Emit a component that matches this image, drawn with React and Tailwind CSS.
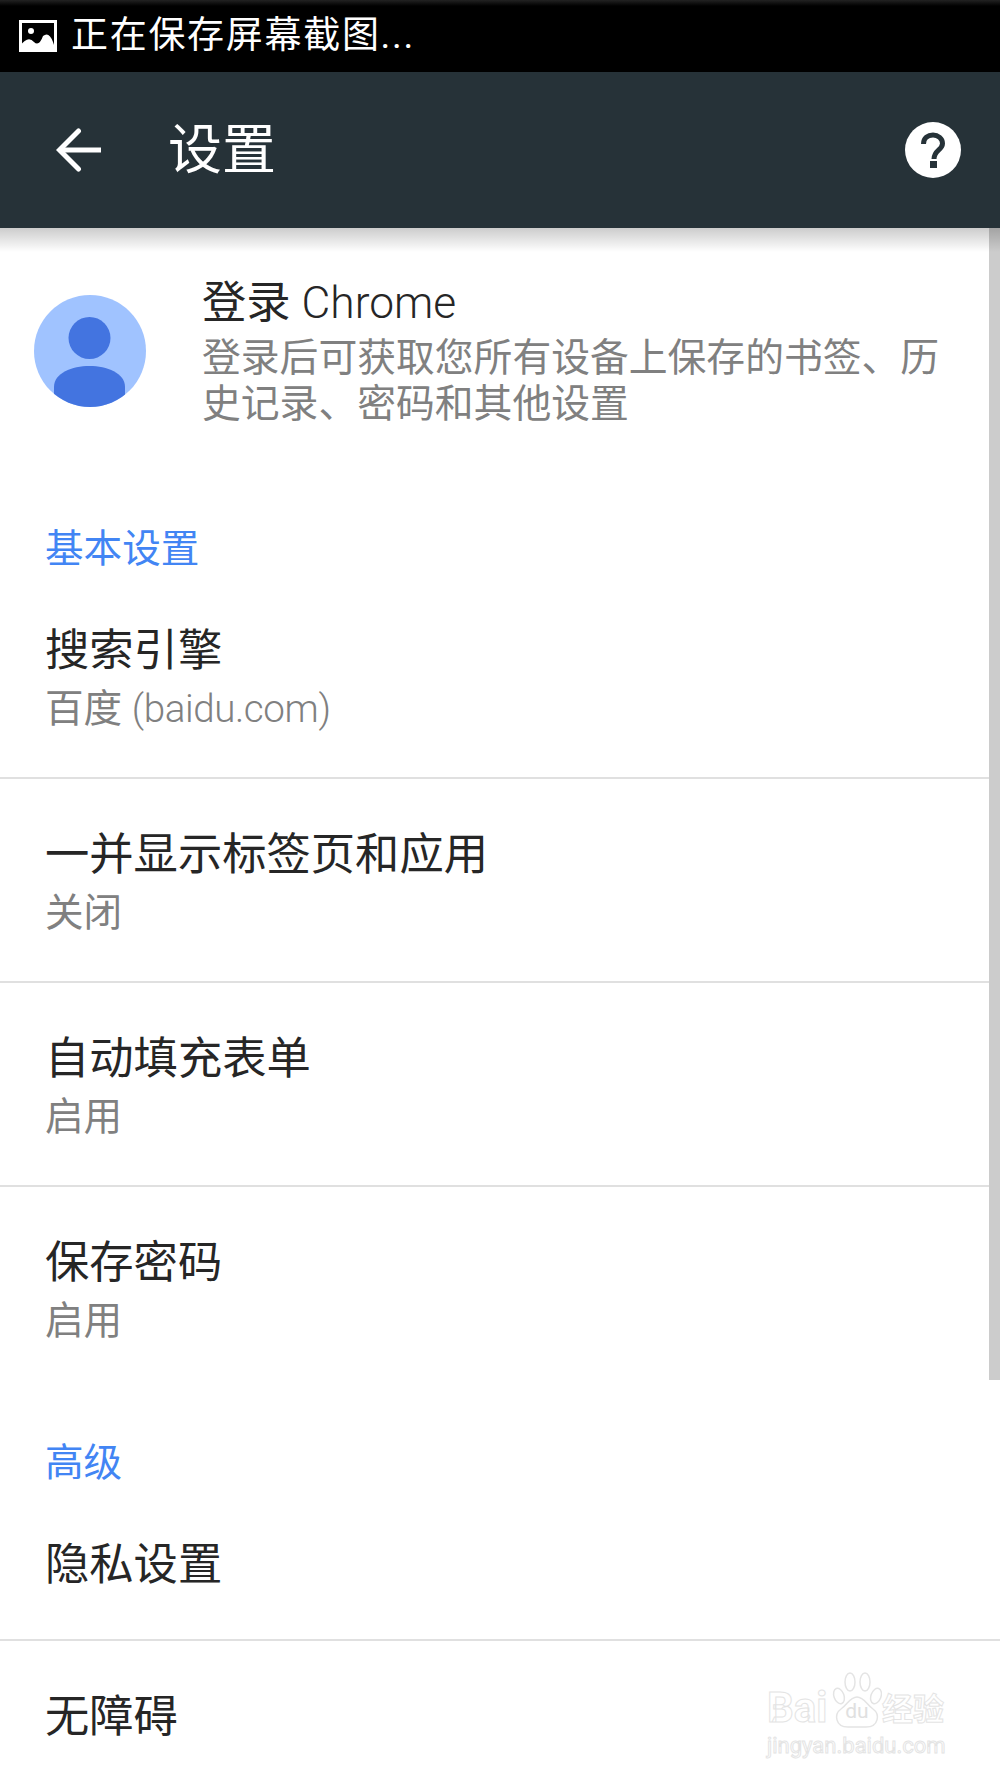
const font = { fontFamily: '"Roboto","Noto Sans CJK SC",sans-serif' };

function Row({ title, sub, border = true, h = "h-[204px]" }) {
  return (
    <div className={`${h} pl-[45px] flex flex-col ${border ? "border-b-2 border-[#e0e0e0]" : ""}`}>
      <div className="pt-[49px] text-[44.3px] leading-[54px] text-[#262626]">{title}</div>
      {sub && <div className="pt-[8px] text-[38.6px] leading-[46px] text-[#808080]">{sub}</div>}
    </div>
  );
}

function Section({ children, className }) {
  return <div className={`pl-[45px] text-[38.6px] leading-[46px] text-[#4285f4] ${className}`}>{children}</div>;
}

const outline = "text-transparent font-bold [-webkit-text-stroke:1px_#e4e4e4]";

function Watermark() {
  return (
    <div className="absolute left-[767px] top-[1672px] flex flex-col">
      <div className="flex items-end h-[56px]">
        <span className={`${outline} text-[42px] leading-[40px] w-[65px]`}>Bai</span>
        <div className="relative w-[50px] h-[56px] flex items-end justify-center pb-[6px]">
          <svg className="absolute inset-0" width="50" height="56" viewBox="0 0 50 56" fill="#fff" stroke="#e4e4e4" strokeWidth="1.5">
            <ellipse cx="7" cy="24" rx="5" ry="8" transform="rotate(-20 7 24)" />
            <ellipse cx="18" cy="10" rx="5" ry="9" />
            <ellipse cx="33" cy="10" rx="5" ry="9" />
            <ellipse cx="44" cy="24" rx="5" ry="8" transform="rotate(20 44 24)" />
            <path d="M25 25 C18 25 15 33 9 37 C2 42 3 55 16 55 H34 C47 55 48 42 41 37 C35 33 32 25 25 25 Z" />
          </svg>
          <span className="relative text-[21px] leading-[22px] text-[#e0e0e0]">du</span>
        </div>
        <span className={`${outline} text-[31px] leading-[36px]`}>经验</span>
      </div>
      <span className="mt-[5px] text-[22px] leading-[26px] text-transparent [-webkit-text-stroke:1px_#e4e4e4]">jingyan.baidu.com</span>
    </div>
  );
}

export default function App() {
  return (
    <div style={font} className="relative w-[1000px] h-[1778px] overflow-hidden bg-white">
      <div className="h-[72px] bg-[linear-gradient(#222,#000_6px)] flex items-center pl-[19px] gap-[14px] text-white text-[37px] leading-[44px]">
        <svg width="38" height="32" viewBox="0 0 38 32">
          <rect x="1.5" y="1.5" width="35" height="29" fill="none" stroke="#fff" strokeWidth="3" />
          <circle cx="12" cy="11" r="3" fill="#fff" />
          <path d="M1 31 V26 Q9 15 15 22 Q20 27 24 16 Q30 11 34 22 L37 31 Z" fill="#fff" />
        </svg>
        <span className="tracking-[1.7px] -mt-[1px]">正在保存屏幕截图...</span>
      </div>
      <div className="relative z-10 h-[156px] bg-[#263238] flex items-center text-white">
        <svg className="ml-[56px]" width="45" height="44" viewBox="0 0 45 44" fill="none" stroke="#fff" strokeWidth="5">
          <path d="M3 22 H45" />
          <path d="M22.5 3 L3.5 22 L22.5 41" strokeLinecap="round" />
        </svg>
        <div className="ml-[67px] text-[54px] leading-[60px] mt-[1px]">设置</div>
        <svg className="ml-auto mr-[39px]" width="56" height="56" viewBox="0 0 56 56">
          <circle cx="28" cy="28" r="28" fill="#fff" />
          <path d="M18.5 22 C18.5 16 23 13 28 13 C33 13 37.5 16.5 37.5 21.5 C37.5 28 29 28 29 37" fill="none" stroke="#263238" strokeWidth="5" />
          <rect x="25" y="39" width="7" height="7" fill="#263238" />
        </svg>
        <div className="absolute top-full inset-x-0 h-[24px] bg-gradient-to-b from-[rgba(0,0,0,0.2)] to-transparent" />
      </div>

      <div className="flex h-[243px]">
        <svg className="ml-[34px] mt-[67px]" width="112" height="112" viewBox="0 0 112 112">
          <defs>
            <clipPath id="c"><circle cx="56" cy="56" r="56" /></clipPath>
          </defs>
          <circle cx="56" cy="56" r="56" fill="#a0c3ff" />
          <circle cx="55.5" cy="43" r="21" fill="#4374e0" />
          <path d="M20 112 V92 C20 78 38 71 55.5 71 C73 71 91 78 91 92 V112 Z" fill="#4374e0" clipPath="url(#c)" />
        </svg>
        <div className="ml-[56px] w-[750px]">
          <div className="pt-[48px] text-[44.3px] leading-[54px] text-[#262626]">登录 <span className="font-light">Chrome</span></div>
          <div className="pt-[5px] text-[38.8px] leading-[46px] text-[#808080]">登录后可获取您所有设备上保存的书签、历史记录、密码和其他设置</div>
        </div>
      </div>

      <Section className="pt-[55px] pb-[3px]">基本设置</Section>
      <Row title="搜索引擎" sub={<>百度 <span className="font-light tracking-[-0.4px]">(baidu.com)</span></>} />
      <Row title="一并显示标签页和应用" sub="关闭" />
      <Row title="自动填充表单" sub="启用" />
      <Row title="保存密码" sub="启用" border={false} />
      <Section className="pt-[49px] pb-[3px]">高级</Section>
      <Row title="隐私设置" h="h-[152px]" />
      <Row title="无障碍" h="h-[136px]" border={false} />

      <div className="absolute right-0 top-[228px] w-[11px] h-[1152px] bg-[#cccccc]" />
      <Watermark />
    </div>
  );
}
